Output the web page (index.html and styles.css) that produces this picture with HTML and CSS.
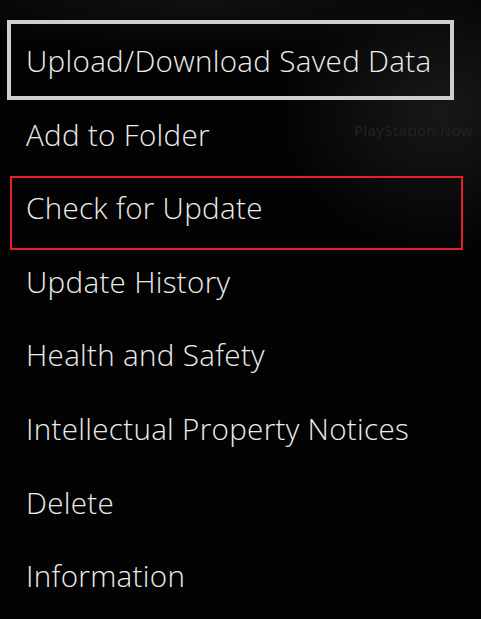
FILE: index.html
```html
<!DOCTYPE html>
<html lang="en">
<head>
<meta charset="utf-8">
<title>Options</title>
<link rel="stylesheet" href="styles.css">
</head>
<body>
<div class="screen">
  <div class="backdrop-text">PlayStation Now</div>
  <ul class="menu">
    <li class="item focused">Upload/Download Saved Data</li>
    <li class="item">Add to Folder</li>
    <li class="item highlighted">Check for Update</li>
    <li class="item">Update History</li>
    <li class="item">Health and Safety</li>
    <li class="item">Intellectual Property Notices</li>
    <li class="item">Delete</li>
    <li class="item">Information</li>
  </ul>
</div>
</body>
</html>
```

FILE: styles.css
```css
html, body {
  margin: 0;
  padding: 0;
  background: #000;
}
.screen {
  position: relative;
  width: 481px;
  height: 619px;
  overflow: hidden;
  background:
    radial-gradient(ellipse 160px 140px at 440px 110px, #181818 0%, #0e0e0e 50%, rgba(0,0,0,0) 100%),
    radial-gradient(ellipse 300px 50px at 200px 0px, #111 0%, rgba(0,0,0,0) 100%),
    #030303;
  font-family: "Open Sans", "Noto Sans", sans-serif;
}
.backdrop-text {
  position: absolute;
  left: 354px;
  top: 120px;
  font-size: 15px;
  font-weight: 600;
  color: #202020;
  white-space: nowrap;
  filter: blur(0.5px);
}
.menu {
  list-style: none;
  margin: 0;
  padding: 24px 0 0 0;
  display: flex;
  flex-direction: column;
}
.item {
  position: relative;
  height: 73.6px;
  display: flex;
  align-items: center;
  padding-left: 26px;
  font-size: 29.6px;
  font-weight: 300;
  letter-spacing: 0.3px;
  color: #ececec;
  line-height: 1;
  white-space: nowrap;
}
.item.focused::before {
  content: "";
  position: absolute;
  left: 7px;
  right: 27px;
  top: -4px;
  bottom: -2px;
  border: 4px solid #cfcfcf;
  box-sizing: border-box;
}
.item.highlighted::before {
  content: "";
  position: absolute;
  left: 10px;
  right: 18px;
  top: 5px;
  bottom: -5px;
  border: 2px solid #e8202a;
  box-sizing: border-box;
}
```
